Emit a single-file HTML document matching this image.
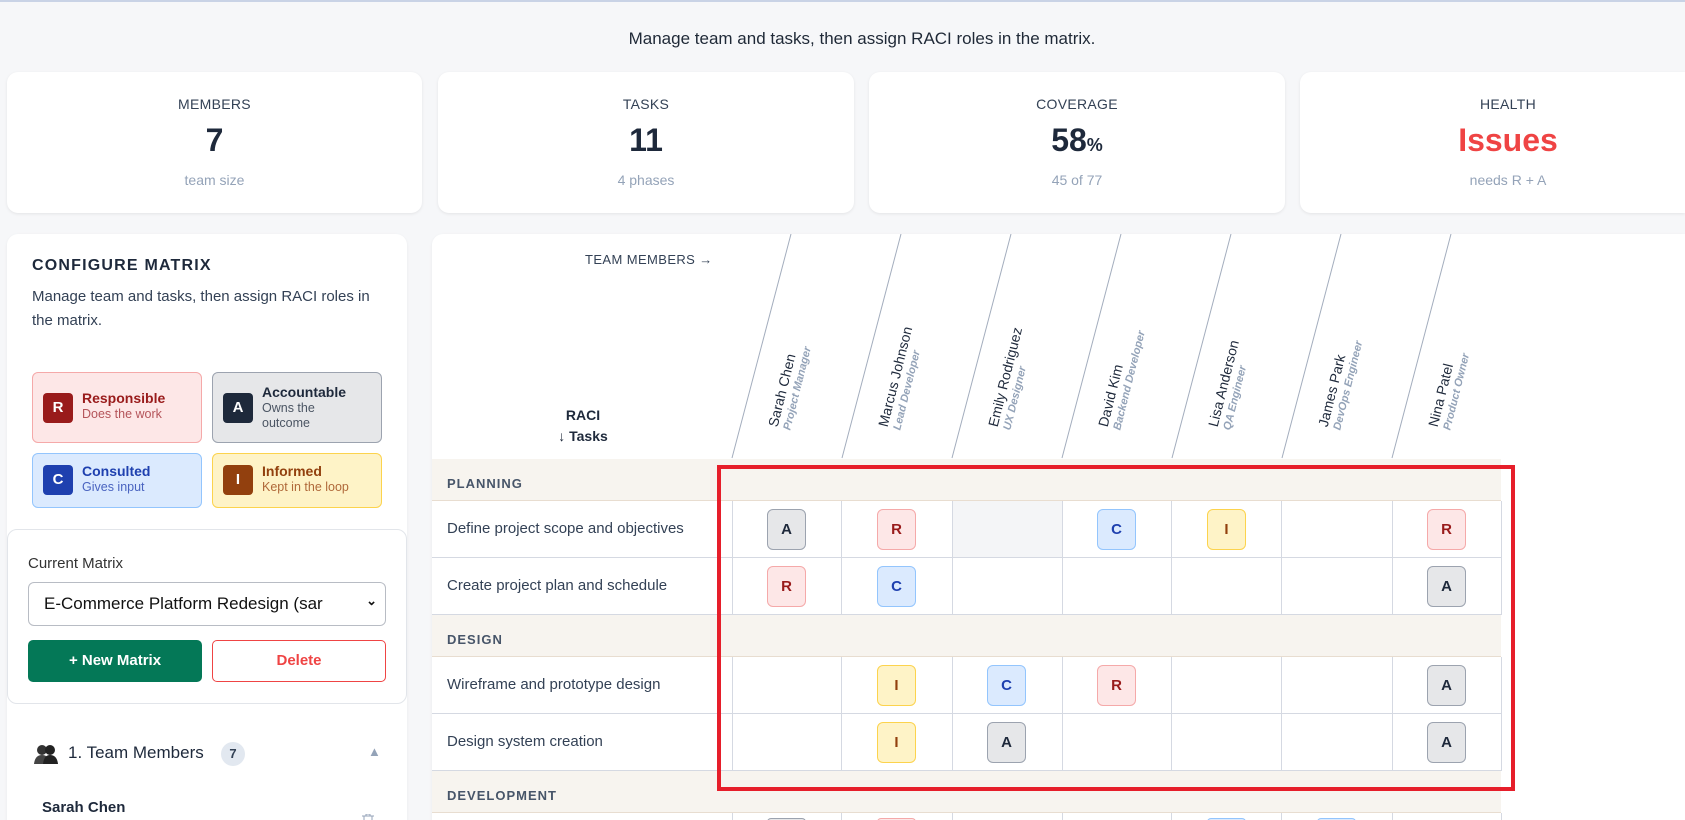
<!DOCTYPE html>
<html><head><meta charset="utf-8"><style>
*{box-sizing:border-box;margin:0;padding:0}
html{width:1685px;height:820px;overflow:hidden}
body{width:1685px;height:820px;overflow:hidden;background:#f6f7f9;font-family:"Liberation Sans",sans-serif;color:#1e293b;position:relative;border-top:2px solid #c9d3e6}
.abs{position:absolute}
.sub{left:0;width:1724px;text-align:center;top:27px;font-size:17px;color:#1f2937}
.card{background:#fff;border-radius:11px;box-shadow:0 1px 3px rgba(0,0,0,.08);text-align:center}
.card .l{margin-top:24px;font-size:14px;color:#334155;letter-spacing:.3px}
.card .v{margin-top:10px;font-size:32px;font-weight:bold;color:#1e293b;height:38px}
.card .s{margin-top:12px;font-size:14px;color:#94a3b8}
.panel{background:#fff;border-radius:11px 11px 0 0;box-shadow:0 1px 3px rgba(0,0,0,.06)}
.leg{position:absolute;border-radius:6px;border:1px solid}
.leg .ic{position:absolute;left:10px;width:30px;height:30px;border-radius:4px;color:#fff;font-weight:bold;font-size:15px;text-align:center;line-height:30px}
.leg .t{position:absolute;left:49px;font-weight:bold;font-size:14px}
.leg .d{position:absolute;left:49px;font-size:12.5px;line-height:15px}
.b{position:absolute;width:39px;height:41px;border-radius:6px;border:1px solid;font-weight:bold;font-size:15px;text-align:center;line-height:39px}
.p{height:4px;border-bottom:none;border-radius:6px 6px 0 0}
.R{background:#fde7e7;border-color:#f5a9a9;color:#991b1b}
.A{background:#e6e7e9;border-color:#9ca3af;color:#1e293b}
.C{background:#dbeafe;border-color:#93c5fd;color:#1e40af}
.I{background:#fef3c7;border-color:#fcd34d;color:#92400e}
.cat{position:absolute;left:432px;width:1069px;height:42px;background:#f7f4ef;border-bottom:1px solid #e8ddd0;font-size:13px;font-weight:bold;color:#475569;letter-spacing:1px;padding:17px 0 0 15px}
.row{position:absolute;left:432px;width:1069px;height:57px;border-bottom:1px solid #d5d9e2;font-size:15px;color:#334155;padding-left:15px;line-height:56px}
.vl{position:absolute;width:1px;background:#d5d9e2}
.hd{position:absolute;transform-origin:0 100%;transform:rotate(-76deg);white-space:nowrap;line-height:15px}
.hd .n{font-size:14px;color:#1e293b}
.hd .r{font-size:11px;font-weight:bold;font-style:italic;color:#94a3b8}
</style></head><body>
<div class="abs sub">Manage team and tasks, then assign RACI roles in the matrix.</div>

<div class="abs card" style="left:7px;top:70px;width:415px;height:141px"><div class="l">MEMBERS</div><div class="v">7</div><div class="s">team size</div></div>
<div class="abs card" style="left:438px;top:70px;width:416px;height:141px"><div class="l">TASKS</div><div class="v">11</div><div class="s">4 phases</div></div>
<div class="abs card" style="left:869px;top:70px;width:416px;height:141px"><div class="l">COVERAGE</div><div class="v">58<span style="font-size:18px">%</span></div><div class="s">45 of 77</div></div>
<div class="abs card" style="left:1300px;top:70px;width:385px;height:141px;border-radius:11px 0 0 11px"><div style="width:416px"><div class="l">HEALTH</div><div class="v" style="color:#ef4444">Issues</div><div class="s">needs R + A</div></div></div>

<div class="abs panel" style="left:7px;top:232px;width:400px;height:588px"></div>
<div class="abs" style="left:32px;top:255px;font-size:16px;font-weight:bold;letter-spacing:1.2px;color:#1e293b">CONFIGURE MATRIX</div>
<div class="abs" style="left:32px;top:283px;width:350px;font-size:15px;line-height:24px;color:#334155">Manage team and tasks, then assign RACI roles in the matrix.</div>

<div class="leg R" style="left:32px;top:370px;width:170px;height:71px"><div class="ic" style="background:#991b1b;top:20px">R</div><div class="t" style="top:17px;color:#991b1b">Responsible</div><div class="d" style="top:34px;color:#b4545a">Does the work</div></div>
<div class="leg A" style="left:212px;top:370px;width:170px;height:71px"><div class="ic" style="background:#1e293b;top:20px">A</div><div class="t" style="top:11px;color:#1e293b">Accountable</div><div class="d" style="top:28px;color:#4b5563">Owns the<br>outcome</div></div>
<div class="leg C" style="left:32px;top:451px;width:170px;height:55px"><div class="ic" style="background:#1e40af;top:11px">C</div><div class="t" style="top:9px;color:#1e40af">Consulted</div><div class="d" style="top:26px;color:#4a64c0">Gives input</div></div>
<div class="leg I" style="left:212px;top:451px;width:170px;height:55px"><div class="ic" style="background:#92400e;top:11px">I</div><div class="t" style="top:9px;color:#92400e">Informed</div><div class="d" style="top:26px;color:#b0693a">Kept in the loop</div></div>

<div class="abs" style="left:7px;top:527px;width:400px;height:175px;background:#fff;border:1px solid #e2e5ea;border-radius:10px"></div>
<div class="abs" style="left:28px;top:553px;font-size:15px;color:#333">Current Matrix</div>
<div class="abs" style="left:28px;top:580px;width:358px;height:44px;border:1px solid #b8bcc4;border-radius:6px;font-size:17px;color:#111;padding:11px 0 0 15px;white-space:nowrap;overflow:hidden">E-Commerce Platform Redesign (sar<span style="position:absolute;right:8px;top:10px;font-size:13px;font-weight:bold">&#8964;</span></div>
<div class="abs" style="left:28px;top:638px;width:174px;height:42px;background:#047857;border-radius:5px;color:#fff;font-weight:bold;font-size:15px;text-align:center;line-height:42px">+ New Matrix</div>
<div class="abs" style="left:212px;top:638px;width:174px;height:42px;border:1px solid #ef4444;border-radius:5px;color:#ef4444;font-weight:bold;font-size:15px;text-align:center;line-height:40px">Delete</div>

<svg class="abs" style="left:34px;top:741px" width="24" height="22" viewBox="0 0 24 22"><circle cx="8" cy="7" r="5" fill="#333"/><circle cx="16" cy="7" r="5" fill="#222"/><path d="M0 21 Q1 12 8 12 Q15 12 16 21Z" fill="#444"/><path d="M9 21 Q10 12 16 12 Q23 12 24 21Z" fill="#222"/></svg>
<div class="abs" style="left:68px;top:741px;font-size:17px;color:#1e293b">1. Team Members</div>
<div class="abs" style="left:221px;top:740px;width:24px;height:24px;border-radius:12px;background:#e2e8f0;font-size:13px;font-weight:bold;color:#334155;text-align:center;line-height:24px">7</div>
<div class="abs" style="left:368px;top:742px;font-size:13px;color:#94a3b8">&#9650;</div>
<div class="abs" style="left:42px;top:797px;font-size:15px;font-weight:bold;color:#1e293b">Sarah Chen</div>
<svg class="abs" style="left:361px;top:812px" width="14" height="8"><path d="M1 2H13M5 2V0H9V2M3 2V8M11 2V8" stroke="#94a3b8" fill="none"/></svg>

<div class="abs panel" style="left:432px;top:232px;width:1253px;height:588px;border-radius:11px 0 0 0"></div>
<div class="abs" style="left:585px;top:250px;font-size:13px;color:#334155;letter-spacing:.4px">TEAM MEMBERS &#8594;</div>
<div class="abs" style="left:540px;top:403px;width:86px;text-align:center;font-size:14px;font-weight:bold;color:#1e293b;line-height:21px">RACI<br>&#8595; Tasks</div>

<svg class="abs" style="left:720px;top:232px" width="820" height="226">
<g stroke="#a3adbd" stroke-width="1">
<line x1="12" y1="224" x2="71" y2="0"/><line x1="122" y1="224" x2="181" y2="0"/><line x1="232" y1="224" x2="291" y2="0"/><line x1="342" y1="224" x2="401" y2="0"/><line x1="452" y1="224" x2="511" y2="0"/><line x1="562" y1="224" x2="621" y2="0"/><line x1="672" y1="224" x2="731" y2="0"/>
</g></svg>

<div class="hd" style="left:795px;top:400px"><div class="n">Sarah Chen</div><div class="r">Project Manager</div></div>
<div class="hd" style="left:905px;top:400px"><div class="n">Marcus Johnson</div><div class="r">Lead Developer</div></div>
<div class="hd" style="left:1015px;top:400px"><div class="n">Emily Rodriguez</div><div class="r">UX Designer</div></div>
<div class="hd" style="left:1125px;top:400px"><div class="n">David Kim</div><div class="r">Backend Developer</div></div>
<div class="hd" style="left:1235px;top:400px"><div class="n">Lisa Anderson</div><div class="r">QA Engineer</div></div>
<div class="hd" style="left:1345px;top:400px"><div class="n">James Park</div><div class="r">DevOps Engineer</div></div>
<div class="hd" style="left:1455px;top:400px"><div class="n">Nina Patel</div><div class="r">Product Owner</div></div>

<div class="cat" style="top:457px">PLANNING</div>
<div class="row" style="top:499px">Define project scope and objectives</div>
<div class="abs" style="left:952px;top:499px;width:110px;height:56px;background:#f4f5f7"></div>
<div class="row" style="top:556px">Create project plan and schedule</div>
<div class="cat" style="top:613px">DESIGN</div>
<div class="row" style="top:655px">Wireframe and prototype design</div>
<div class="row" style="top:712px">Design system creation</div>
<div class="cat" style="top:769px">DEVELOPMENT</div>

<div class="vl" style="left:732px;top:499px;height:114px"></div><div class="vl" style="left:841px;top:499px;height:114px"></div><div class="vl" style="left:952px;top:499px;height:114px"></div><div class="vl" style="left:1062px;top:499px;height:114px"></div><div class="vl" style="left:1171px;top:499px;height:114px"></div><div class="vl" style="left:1281px;top:499px;height:114px"></div><div class="vl" style="left:1392px;top:499px;height:114px"></div><div class="vl" style="left:1501px;top:499px;height:114px"></div>
<div class="vl" style="left:732px;top:655px;height:114px"></div><div class="vl" style="left:841px;top:655px;height:114px"></div><div class="vl" style="left:952px;top:655px;height:114px"></div><div class="vl" style="left:1062px;top:655px;height:114px"></div><div class="vl" style="left:1171px;top:655px;height:114px"></div><div class="vl" style="left:1281px;top:655px;height:114px"></div><div class="vl" style="left:1392px;top:655px;height:114px"></div><div class="vl" style="left:1501px;top:655px;height:114px"></div>
<div class="vl" style="left:732px;top:811px;height:9px"></div><div class="vl" style="left:841px;top:811px;height:9px"></div><div class="vl" style="left:952px;top:811px;height:9px"></div><div class="vl" style="left:1062px;top:811px;height:9px"></div><div class="vl" style="left:1171px;top:811px;height:9px"></div><div class="vl" style="left:1281px;top:811px;height:9px"></div><div class="vl" style="left:1392px;top:811px;height:9px"></div><div class="vl" style="left:1501px;top:811px;height:9px"></div>

<div class="b A" style="left:767px;top:507px">A</div>
<div class="b R" style="left:877px;top:507px">R</div>
<div class="b C" style="left:1097px;top:507px">C</div>
<div class="b I" style="left:1207px;top:507px">I</div>
<div class="b R" style="left:1427px;top:507px">R</div>
<div class="b R" style="left:767px;top:564px">R</div>
<div class="b C" style="left:877px;top:564px">C</div>
<div class="b A" style="left:1427px;top:564px">A</div>
<div class="b I" style="left:877px;top:663px">I</div>
<div class="b C" style="left:987px;top:663px">C</div>
<div class="b R" style="left:1097px;top:663px">R</div>
<div class="b A" style="left:1427px;top:663px">A</div>
<div class="b I" style="left:877px;top:720px">I</div>
<div class="b A" style="left:987px;top:720px">A</div>
<div class="b A" style="left:1427px;top:720px">A</div>
<div class="b A p" style="left:767px;top:816px"></div>
<div class="b R p" style="left:877px;top:816px"></div>
<div class="b C p" style="left:1207px;top:816px"></div>
<div class="b C p" style="left:1317px;top:816px"></div>

<div class="abs" style="left:717px;top:463px;width:798px;height:326px;border:4px solid #e61e2a"></div>
</body></html>
